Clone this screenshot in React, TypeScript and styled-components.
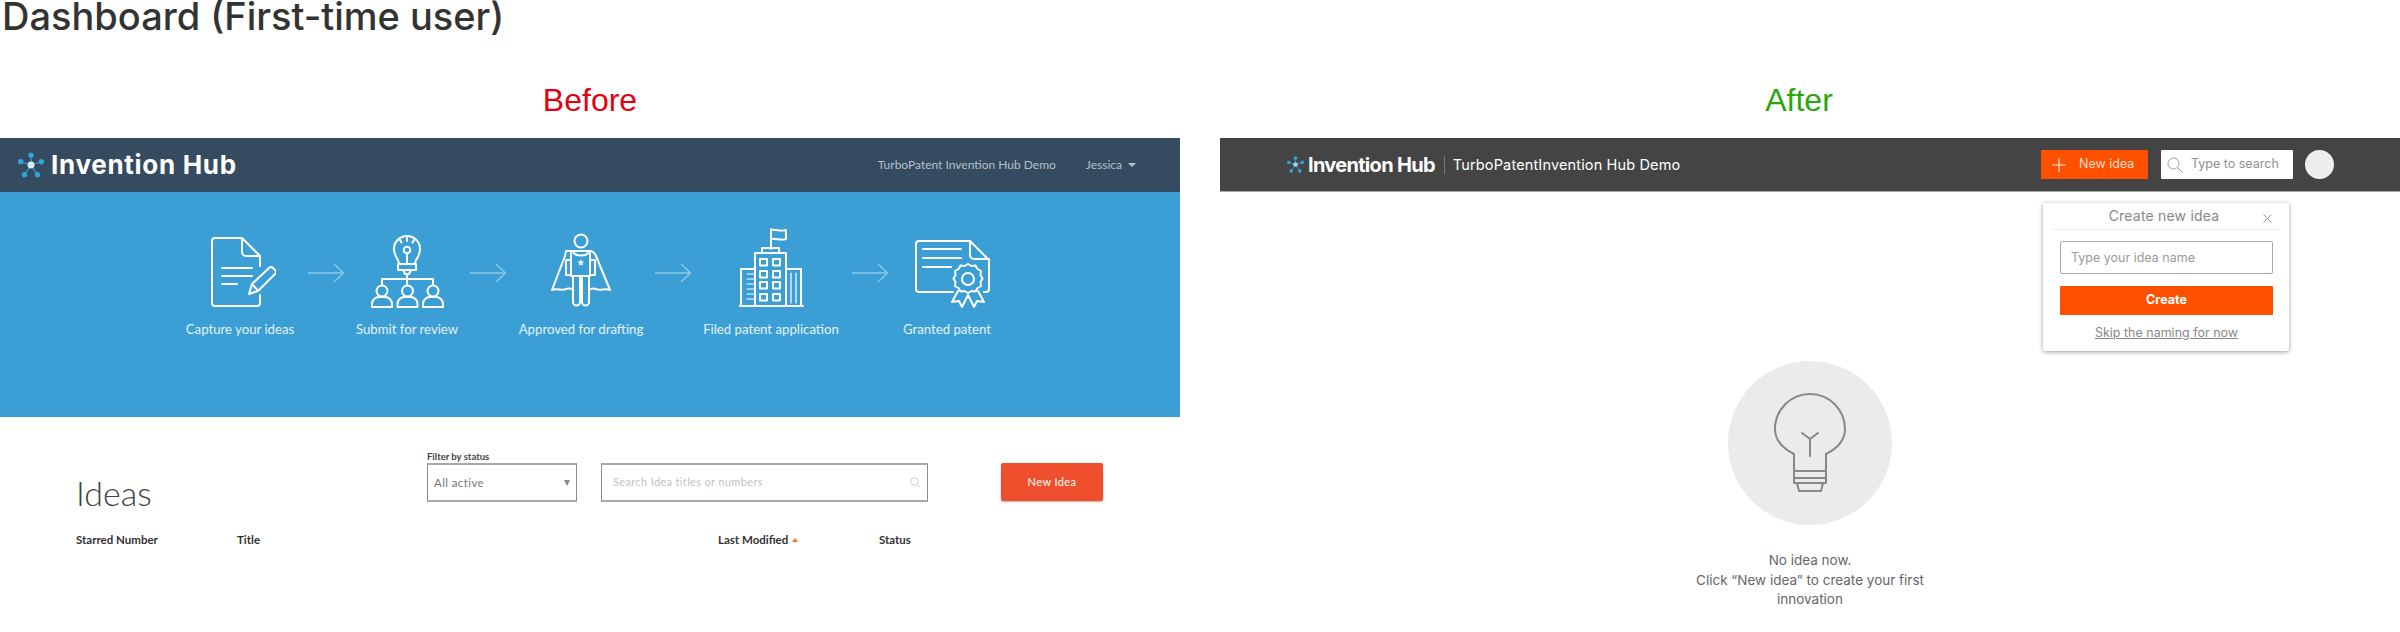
import React from 'react';
import styled, { createGlobalStyle } from 'styled-components';

const GlobalStyle = createGlobalStyle`
  html, body {
    margin: 0;
    padding: 0;
    background: #fff;
    overflow: hidden;
  }
`;

const Page = styled.div`
  width: 2400px;
  height: 632px;
  overflow: hidden;
  font-family: 'Lato', 'Liberation Sans', sans-serif;
`;

const Heading = styled.h1`
  margin: 0;
  height: 40px;
  padding-left: 2px;
  font: 500 38px/32px 'Inter', 'Liberation Sans', sans-serif;
  color: #333;
`;

const Columns = styled.div`
  display: grid;
  grid-template-columns: 1180px 1180px;
  column-gap: 40px;
`;

const Column = styled.section`
  position: relative;
  min-width: 0;
`;

const VersionLabel = styled.div<{ $color: string; $offset: number }>`
  height: 98px;
  padding: 42px ${(p) => p.$offset}px 0 0;
  box-sizing: border-box;
  text-align: center;
  font: 400 32px/36px 'Liberation Sans', sans-serif;
  color: ${(p) => p.$color};
`;

/* ---- before ---- */

const OldHeader = styled.header`
  height: 54px;
  display: flex;
  align-items: center;
  padding: 0 44px 0 18px;
  background: #344b60;
`;

const OldBrand = styled.div`
  display: flex;
  align-items: center;
  gap: 7px;
  font: 700 26px/1 'Inter', sans-serif;
  letter-spacing: 0.7px;
  color: #fff;
`;

const OldNav = styled.nav`
  margin-left: auto;
  display: flex;
  align-items: center;
  gap: 30px;
  font: 400 12px/1 'Lato', sans-serif;
  color: #b4c0ca;
`;

const Caret = styled.span`
  display: inline-block;
  margin-left: 6px;
  vertical-align: 2px;
  border-left: 4px solid transparent;
  border-right: 4px solid transparent;
  border-top: 4px solid #b4c0ca;
`;

const Banner = styled.div`
  height: 225px;
  box-sizing: border-box;
  background: #3b9fd5;
  padding: 36px 0 0 180px;
  display: flex;
  align-items: flex-start;
`;

const Step = styled.div<{ $width: number }>`
  width: ${(p) => p.$width}px;
  flex: none;
  height: 109px;
  display: flex;
  flex-direction: column;
  align-items: center;
  justify-content: space-between;
  font: 400 13.2px/16px 'Lato', sans-serif;
  color: #e3f2fa;
  white-space: nowrap;
`;

const StepIcon = styled.div<{ $shift: number }>`
  height: 80px;
  padding-left: ${(p) => p.$shift}px;
  display: flex;
  align-items: flex-end;
`;

const ArrowSlot = styled.div<{ $left: number; $width: number }>`
  flex: none;
  width: ${(p) => p.$width}px;
  padding: 35px 0 0 ${(p) => p.$left}px;
  box-sizing: border-box;
`;

const Toolbar = styled.div`
  display: flex;
  align-items: flex-start;
  padding: 38px 0 0 76px;
`;

const PageTitle = styled.h2`
  margin: 18px 0 0;
  width: 351px;
  font: 300 34px/40px 'Lato', sans-serif;
  color: #3f3f3f;
`;

const FilterField = styled.div`
  width: 150px;
  margin-right: 24px;
`;

const FilterLabel = styled.div`
  height: 8px;
  font: 700 9.5px/8px 'Lato', sans-serif;
  color: #444;
  transform: translateY(-2px);
  white-space: nowrap;
`;

const OldControl = styled.div<{ $width: number; $top: number }>`
  width: ${(p) => p.$width}px;
  height: 39px;
  margin-top: ${(p) => p.$top}px;
  box-sizing: border-box;
  display: flex;
  align-items: center;
  justify-content: space-between;
  padding: 0 6px 0 8px;
  background: #fff;
  border: 1px solid #8c8c8c;
  border-top: 2px solid #a8a8a8;
  border-bottom: 2px solid #a8a8a8;
`;

const SelectText = styled.span`
  font: 400 11.5px/1 'Lato', sans-serif;
  letter-spacing: 0.4px;
  color: #777;
  transform: translateX(-2px);
`;

const SelectCaret = styled.span`
  border-left: 3px solid transparent;
  border-right: 3px solid transparent;
  border-top: 6px solid #888;
`;

const SearchHint = styled.span`
  padding-left: 3px;
  font: 400 11px/1 'Lato', sans-serif;
  letter-spacing: 0.35px;
  color: #c2c2c2;
  transform: translateY(-1px);
`;

const OldButton = styled.button`
  width: 102px;
  height: 38px;
  margin: 8px 0 0 73px;
  padding-bottom: 3px;
  border: 0;
  border-radius: 2px;
  background: #f04f2e;
  box-shadow: 0 1px 2px rgba(0, 0, 0, 0.3);
  font: 400 11px/1 'Lato', sans-serif;
  letter-spacing: 0.4px;
  color: #fff;
`;

const TableHead = styled.div`
  display: grid;
  grid-template-columns: 161px 481px 161px auto;
  padding: 20px 0 0 76px;
  font: 700 11.5px/14px 'Lato', sans-serif;
  color: #333;
`;

const SortMark = styled.span`
  display: inline-block;
  margin-left: 4px;
  vertical-align: 2px;
  border-left: 3px solid transparent;
  border-right: 3px solid transparent;
  border-bottom: 4px solid #ee7a22;
`;

/* ---- after ---- */

const NewHeader = styled.header`
  height: 53px;
  display: flex;
  align-items: center;
  padding-left: 67px;
  background: #444;
  border-bottom: 1px solid #aaa;
`;

const NewBrand = styled.div`
  display: flex;
  align-items: center;
  gap: 4px;
  padding-right: 9px;
  font: 700 20px/1 'Inter', sans-serif;
  letter-spacing: -0.7px;
  color: #fff;
`;

const ProductName = styled.div`
  height: 18px;
  padding-left: 8px;
  border-left: 1px solid #777;
  font: 400 14.5px/18px 'Inter', sans-serif;
  letter-spacing: 0.15px;
  color: #fff;
  white-space: nowrap;
`;

const HeaderTools = styled.div`
  margin-left: auto;
  margin-right: 66px;
  display: flex;
  align-items: center;
`;

const NewIdeaButton = styled.button`
  width: 107px;
  height: 29px;
  margin-right: 13px;
  padding: 0 0 0 11px;
  display: flex;
  align-items: center;
  gap: 13px;
  border: 0;
  border-radius: 1px;
  background: #ff5000;
  font: 400 12.5px/1 'Inter', sans-serif;
  color: #ffdcca;
`;

const HeaderSearch = styled.div`
  width: 132px;
  height: 29px;
  margin-right: 12px;
  box-sizing: border-box;
  padding-left: 6px;
  display: flex;
  align-items: center;
  gap: 8px;
  border-radius: 1px;
  background: #fff;
  font: 400 12.5px/1 'Inter', sans-serif;
  color: #8f8f8f;
`;

const Avatar = styled.div`
  width: 29px;
  height: 29px;
  border-radius: 50%;
  background: #eee;
`;

const IdeaCard = styled.div`
  position: absolute;
  left: 823px;
  top: 163px;
  width: 246px;
  height: 148px;
  box-sizing: border-box;
  padding: 0 9px;
  background: #fff;
  border-radius: 2px;
  box-shadow: 0 1px 4px rgba(0, 0, 0, 0.4);
`;

const CardTitle = styled.div`
  position: relative;
  height: 26px;
  padding-right: 4px;
  border-bottom: 1px solid #f1f1f1;
  text-align: center;
  font: 400 14px/26px 'Inter', sans-serif;
  letter-spacing: 0.2px;
  color: #888;
`;

const CardClose = styled.span`
  position: absolute;
  right: 8px;
  top: 11px;
  display: flex;
`;

const CardBody = styled.div`
  padding: 11px 7px 0 8px;
  display: flex;
  flex-direction: column;
`;

const NameInput = styled.div`
  height: 33px;
  box-sizing: border-box;
  padding-left: 10px;
  border: 1px solid #aaa;
  border-radius: 2px;
  font: 400 12.5px/31px 'Inter', sans-serif;
  color: #999;
`;

const CreateButton = styled.button`
  height: 29px;
  margin-top: 12px;
  border: 0;
  border-radius: 1px;
  background: #ff5000;
  font: 700 12.5px/1 'Inter', sans-serif;
  color: #fff;
`;

const SkipLink = styled.a`
  margin-top: 10px;
  text-align: center;
  font: 400 12.5px/16px 'Inter', sans-serif;
  text-decoration: underline;
  color: #888;
`;

const EmptyState = styled.div`
  display: flex;
  flex-direction: column;
  align-items: center;
  padding-top: 169px;
`;

const EmptyCircle = styled.div`
  width: 164px;
  height: 164px;
  border-radius: 50%;
  background: #ebebeb;
  display: flex;
  align-items: center;
  justify-content: center;
`;

const EmptyText = styled.p`
  width: 240px;
  margin: 26px 0 0;
  text-align: center;
  font: 400 13.5px/19.6px 'Inter', sans-serif;
  color: #666;
`;

const LogoMark = ({ size, hub }: { size: number; hub: string }) => {
  const nodes = [
    [12, 3],
    [2.5, 9],
    [21.5, 9],
    [6, 21],
    [18, 21],
  ];
  return (
    <svg width={size} height={size} viewBox="0 0 24 24">
      {nodes.map(([x, y]) => (
        <line key={`l${x}${y}`} x1={12} y1={12} x2={x} y2={y} stroke="#2f9fd0" strokeWidth={1.2} />
      ))}
      {nodes.map(([x, y]) => (
        <circle key={`c${x}${y}`} cx={x} cy={y} r={2.5} fill="#2fa5da" />
      ))}
      <circle cx={12} cy={12} r={3.2} fill={hub} />
    </svg>
  );
};

const StepArrow = () => (
  <svg width="37" height="20" viewBox="0 0 37 20" fill="none" stroke="#fff" strokeOpacity={0.42} strokeWidth={1.4}>
    <path d="M0 10H35M26 1L35.5 10L26 19" />
  </svg>
);

const lineIcon = {
  fill: 'none',
  stroke: '#fff',
  strokeWidth: 2,
  strokeLinejoin: 'round' as const,
  strokeLinecap: 'round' as const,
};

const DocumentIcon = () => (
  <svg width="66" height="71" viewBox="0 0 66 71" {...lineIcon}>
    <path d="M32 1H5a3 3 0 0 0-3 3v62a3 3 0 0 0 3 3h42a3 3 0 0 0 3-3v-8M50 29V19L32 1v14a4 4 0 0 0 4 4h14" />
    <path d="M12 31H42M12 39H42M12 47H27" />
    <path d="M39 57L42 47L59 31a3 3 0 0 1 4 0l2 2a3 3 0 0 1 0 4L48 54ZM42 47L48 54" />
  </svg>
);

const ReviewIcon = () => (
  <svg width="74" height="73" viewBox="0 0 74 73" {...lineIcon}>
    <path d="M29 29c0-5-5-7-5-15a13 13 0 0 1 26 0c0 8-5 10-5 15Z" />
    <circle cx="37" cy="15" r="3.300" />
    <path d="M37 19v10M37 3V6M30 5l1.500 2.500M44 5l-1.500 2.500" />
    <path d="M28 29H46V35H28ZM33 35H41L39 39H35Z" />
    <path d="M37 39V50M12 50V44H63V50" />
    <circle cx="12" cy="56" r="5.500" />
    <circle cx="37.500" cy="56" r="5.500" />
    <circle cx="63" cy="56" r="5.500" />
    <path d="M2 72v-3a7 7 0 0 1 7-7h6a7 7 0 0 1 7 7v3ZM27.500 72v-3a7 7 0 0 1 7-7h6a7 7 0 0 1 7 7v3ZM53 72v-3a7 7 0 0 1 7-7h6a7 7 0 0 1 7 7v3Z" />
  </svg>
);

const HeroIcon = () => (
  <svg width="60" height="75" viewBox="0 0 60 75" {...lineIcon}>
    <circle cx="30" cy="8" r="6.500" />
    <path d="M22 18h16c4 0 6 2 7 5L59 57c-5-2-10 1-14-1-3-1-4 0-6 0M22 18h-7L14 23 1 57c5-2 10 1 14-1 3-1 5 0 7 0" />
    <path d="M22 18c1 6 15 6 16 0M15 27v15h5V27ZM39 27v15h5V27Z" />
    <path d="M20 20V43h2V69a3.500 3.500 0 0 0 7 0V45h2V69a3.500 3.500 0 0 0 7 0V43h1V20" />
    <path d="M22 43H38" />
    <path d="M29.800 26l1 2.500 2.500.2-2 1.600.7 2.500-2.200-1.400-2.200 1.400.7-2.500-2-1.600 2.500-.2Z" fill="#fff" stroke="none" />
  </svg>
);

const BuildingIcon = () => {
  const rows = [31, 43, 54, 66];
  return (
    <svg width="65" height="80" viewBox="0 0 65 80" {...lineIcon}>
      <path d="M32 21V1M32 2C37 1 42 4 47 2V11C42 13 37 10 32 11" />
      <path d="M23 25V20H40V25M16 78V25H47V78M16 41H2V78M47 41H62V78M0 78H64" />
      {rows.map((y) => (
        <g key={y}>
          <rect x="21" y={y} width="7" height="6.500" />
          <rect x="34" y={y} width="7" height="6.500" />
        </g>
      ))}
      <path d="M8 46H16M8 51H16M8 56H16M8 61H16M8 66H16M8 71H16M52 45V75M57 45V75" strokeWidth={1.2} />
    </svg>
  );
};

const CertificateIcon = () => (
  <svg width="75" height="68" viewBox="0 0 75 68" {...lineIcon}>
    <path d="M38 52H4a3 3 0 0 1-3-3V4a3 3 0 0 1 3-3H55L74 20V49a3 3 0 0 1-3 3H69" />
    <path d="M55 1V15a4 4 0 0 0 4 4H74" />
    <path d="M8 9H46M8 18H46M8 27H36" />
    <path d="M53 24l3.500 2 4-.5 2 3.500 3.500 2-.5 4 2 3.500-2 3.500.5 4-3.500 2-2 3.500-4-.5-3.500 2-3.500-2-4 .5-2-3.500-3.500-2 .5-4-2-3.500 2-3.500-.5-4 3.500-2 2-3.500 4 .5Z" fill="#3b9fd5" />
    <circle cx="53" cy="39" r="6" />
    <path d="M43 51L37 62L44 61L47 67L53 55L59 67L62 61L69 62L63 51" />
  </svg>
);

const Bulb = () => (
  <svg width="72" height="100" viewBox="0 0 72 100" fill="none" stroke="#888" strokeWidth={2} strokeLinejoin="round" strokeLinecap="round">
    <path d="M20 67V61C8 55 1 47 1 36a35 35 0 0 1 70 0c0 11-7 19-19 25v6" />
    <path d="M20 67V90H52V67" />
    <path d="M20 78H52M20 85H52" />
    <path d="M23 90L25 98H47L49 90" />
    <path d="M36 63V46M28 40L36 46L44 40" />
  </svg>
);

const SearchGlyph = ({ size, color }: { size: number; color: string }) => (
  <svg width={size} height={size} viewBox="0 0 16 16" fill="none" stroke={color} strokeWidth={1}>
    <circle cx="6.500" cy="6.500" r="5.500" />
    <path d="M10.500 10.500L15.500 15.500" />
  </svg>
);

const Cross = () => (
  <svg width="9" height="9" viewBox="0 0 9 9" stroke="#999" strokeWidth={1}>
    <path d="M0.500 0.500L8.500 8.500M8.500 0.500L0.500 8.500" />
  </svg>
);

const Plus = () => (
  <svg width="14" height="14" viewBox="0 0 14 14" stroke="#ffe6da" strokeWidth={1.2}>
    <path d="M7 0V14M0 7H14" />
  </svg>
);

const steps = [
  { label: 'Capture your ideas', width: 120, shift: 6, icon: <DocumentIcon /> },
  { label: 'Submit for review', width: 120, shift: 0, icon: <ReviewIcon /> },
  { label: 'Approved for drafting', width: 130, shift: 0, icon: <HeroIcon /> },
  { label: 'Filed patent application', width: 140, shift: 0, icon: <BuildingIcon /> },
  { label: 'Granted patent', width: 110, shift: 11, icon: <CertificateIcon /> },
];

const arrows = [
  { left: 8, width: 47 },
  { left: 3, width: 49 },
  { left: 9, width: 55 },
  { left: 11, width: 51 },
];

export default function App() {
  return (
    <Page>
      <GlobalStyle />
      <Heading>Dashboard (First-time user)</Heading>
      <Columns>
        <Column>
          <VersionLabel $color="#e4000f" $offset={0}>
            Before
          </VersionLabel>
          <OldHeader>
            <OldBrand>
              <LogoMark size={26} hub="#d5effa" />
              Invention Hub
            </OldBrand>
            <OldNav>
              <span>TurboPatent Invention Hub Demo</span>
              <span>
                Jessica
                <Caret />
              </span>
            </OldNav>
          </OldHeader>
          <Banner>
            {steps.map((s, i) => (
              <React.Fragment key={s.label}>
                <Step $width={s.width}>
                  <StepIcon $shift={s.shift}>{s.icon}</StepIcon>
                  {s.label}
                </Step>
                {arrows[i] && (
                  <ArrowSlot $left={arrows[i].left} $width={arrows[i].width}>
                    <StepArrow />
                  </ArrowSlot>
                )}
              </React.Fragment>
            ))}
          </Banner>
          <Toolbar>
            <PageTitle>Ideas</PageTitle>
            <FilterField>
              <FilterLabel>Filter by status</FilterLabel>
              <OldControl $width={150} $top={0}>
                <SelectText>All active</SelectText>
                <SelectCaret />
              </OldControl>
            </FilterField>
            <OldControl $width={327} $top={8}>
              <SearchHint>Search Idea titles or numbers</SearchHint>
              <SearchGlyph size={11} color="#bbb" />
            </OldControl>
            <OldButton>New Idea</OldButton>
          </Toolbar>
          <TableHead>
            <span>Starred Number</span>
            <span>Title</span>
            <span>
              Last Modified
              <SortMark />
            </span>
            <span>Status</span>
          </TableHead>
        </Column>
        <Column>
          <VersionLabel $color="#2aa70a" $offset={22}>
            After
          </VersionLabel>
          <NewHeader>
            <NewBrand>
              <LogoMark size={17} hub="#9bd6ef" />
              Invention Hub
            </NewBrand>
            <ProductName>TurboPatentInvention Hub Demo</ProductName>
            <HeaderTools>
              <NewIdeaButton>
                <Plus />
                New idea
              </NewIdeaButton>
              <HeaderSearch>
                <SearchGlyph size={16} color="#999" />
                Type to search
              </HeaderSearch>
              <Avatar />
            </HeaderTools>
          </NewHeader>
          <IdeaCard>
            <CardTitle>
              Create new idea
              <CardClose>
                <Cross />
              </CardClose>
            </CardTitle>
            <CardBody>
              <NameInput>Type your idea name</NameInput>
              <CreateButton>Create</CreateButton>
              <SkipLink>Skip the naming for now</SkipLink>
            </CardBody>
          </IdeaCard>
          <EmptyState>
            <EmptyCircle>
              <Bulb />
            </EmptyCircle>
            <EmptyText>
              No idea now.
              <br />
              Click “New idea” to create your first innovation
            </EmptyText>
          </EmptyState>
        </Column>
      </Columns>
    </Page>
  );
}
